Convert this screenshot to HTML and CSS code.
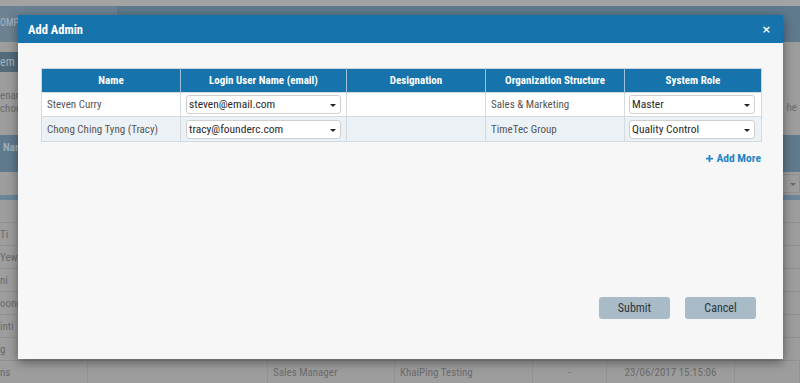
FILE: index.html
```html
<!DOCTYPE html>
<html lang="en">
  <head>
    <meta charset="UTF-8" />
    <title>Add Admin</title>
    <meta name="viewport" content="width=device-width, initial-scale=1.0" />
    <link rel="stylesheet" href="styles.css">
  </head>
  <body>
    <div class="page">
      <!-- page behind the dialog -->
      <div class="topbar"></div>
      <div class="appbar">
        <div class="brand">OMP</div>
      </div>
      <div class="section">
        <span class="section-title">em</span>
      </div>
      <div class="intro">
        <p class="intro-left">enan<br />choo</p>
        <p class="intro-right">he</p>
      </div>
      <div class="list-head">
        <span>Nar</span>
      </div>
      <div class="filter">
        <span class="filter-select"><span class="caret"></span></span>
      </div>
      <div class="list-line"></div>
      <div class="list">
        <div class="list-row"><span></span></div>
        <div class="list-row"><span>Ti</span></div>
        <div class="list-row"><span>Yew</span></div>
        <div class="list-row"><span>ni</span></div>
        <div class="list-row"><span>oong</span></div>
        <div class="list-row"><span>inti</span></div>
        <div class="list-row"><span>g</span></div>
        <div class="list-row last">
          <span>ns</span>
          <span></span>
          <span>Sales Manager</span>
          <span>KhaiPing Testing</span>
          <span class="center">-</span>
          <span class="center">23/06/2017 15:15:06</span>
          <span></span>
        </div>
      </div>

      <!-- dialog -->
      <div class="modal">
        <div class="modal-head">
          <h2 class="modal-title">Add Admin</h2>
          <button class="close">&times;</button>
        </div>
        <div class="modal-body">
          <table class="admins">
            <colgroup>
              <col style="width: 139px" />
              <col style="width: 166px" />
              <col style="width: 139px" />
              <col style="width: 139px" />
              <col style="width: 137px" />
            </colgroup>
            <thead>
              <tr>
                <th>Name</th>
                <th>Login User Name (email)</th>
                <th>Designation</th>
                <th>Organization Structure</th>
                <th>System Role</th>
              </tr>
            </thead>
            <tbody>
              <tr>
                <td>Steven Curry</td>
                <td class="pick">
                  <div class="select">steven@email.com<span class="caret"></span></div>
                </td>
                <td></td>
                <td>Sales &amp; Marketing</td>
                <td class="pick role">
                  <div class="select">Master<span class="caret"></span></div>
                </td>
              </tr>
              <tr>
                <td>Chong Ching Tyng (Tracy)</td>
                <td class="pick">
                  <div class="select">tracy@founderc.com<span class="caret"></span></div>
                </td>
                <td></td>
                <td>TimeTec Group</td>
                <td class="pick role">
                  <div class="select">Quality Control<span class="caret"></span></div>
                </td>
              </tr>
            </tbody>
          </table>

          <a href="#" class="add-more">
            <svg width="7" height="7" viewBox="0 0 8 8">
              <path d="M3 0h2v3h3v2H5v3H3V5H0V3h3z" fill="currentColor" />
            </svg>
            Add More
          </a>

          <div class="actions">
            <button class="btn">Submit</button>
            <button class="btn">Cancel</button>
          </div>
        </div>
      </div>
    </div>
  </body>
</html>
```

FILE: styles.css
```css
body {
  margin: 0;
  font-family: "Roboto Condensed", "Open Sans", sans-serif;
}
.page {
  position: relative;
  height: 383px;
  overflow: hidden;
  background: #9d9d9d;
  color: #6b6b6b;
  font-size: 11px;
}

/* background page (dimmed) */
.topbar {
  height: 6px;
  background: #a3a3a3;
}
.appbar {
  height: 36px;
  background: #5f7a8d;
  display: flex;
}
.appbar .brand {
  width: 117px;
  background: #6c8292;
  color: #a9b6bf;
  font-size: 10px;
  padding-top: 11px;
  box-sizing: border-box;
}
.section {
  height: 20px;
  margin-top: 10px;
  display: flex;
}
.section-title {
  width: 40px;
  background: #536b7b;
  color: #a7b3bb;
  font-size: 12px;
  line-height: 20px;
}
.intro {
  height: 63px;
  display: flex;
  justify-content: space-between;
}
.intro p {
  margin: 0;
  font-size: 11px;
  line-height: 13px;
}
.intro-left {
  padding-top: 17px;
}
.intro-right {
  padding-top: 29px;
  padding-right: 3px;
}
.list-head {
  height: 37px;
  background: #5f7a8c;
  color: #9fafba;
  font-size: 11px;
  font-weight: bold;
  line-height: 26px;
  padding-left: 3px;
}
.filter {
  height: 23px;
  display: flex;
  justify-content: flex-end;
  align-items: center;
}
.filter-select {
  position: relative;
  width: 60px;
  height: 17px;
  border: 1px solid #8f8f8f;
  border-radius: 2px;
}
.filter-select .caret {
  right: 3px;
  border-top-color: #6a6a6a;
}
.list-line {
  height: 5px;
  background: #6b8699;
}
.list-row {
  height: 22px;
  border-bottom: 1px solid #919191;
  display: grid;
  grid-template-columns: 88px 180px 127px 138px 74px 128px 1fr;
  align-items: center;
  font-size: 11px;
}
.list-row.last {
  border-bottom: none;
  padding-top: 1px;
}
.list-row.last span {
  border-right: 1px solid #929292;
  height: 22px;
  line-height: 22px;
  padding-left: 5px;
}
.list-row.last span:first-child {
  padding-left: 0;
}
.list-row .center {
  text-align: center;
  padding-left: 0 !important;
}

/* dialog */
.modal {
  position: absolute;
  left: 18px;
  top: 15px;
  width: 765px;
  height: 344px;
  background: #f7f7f7;
  box-shadow: 0 3px 10px rgba(0, 0, 0, 0.45);
  display: flex;
  flex-direction: column;
}
.modal-head {
  height: 28px;
  background: #1673ab;
  display: flex;
  align-items: center;
  justify-content: space-between;
  padding: 0 12px 0 10px;
}
.modal-title {
  margin: 0;
  color: white;
  font-size: 12.5px;
  font-weight: bold;
}
.close {
  background: none;
  border: none;
  padding: 0;
  color: white;
  font-family: "DejaVu Sans", sans-serif;
  font-size: 11px;
  font-weight: bold;
  line-height: 1;
}
.modal-body {
  flex: 1;
  display: flex;
  flex-direction: column;
  padding: 25px 22px 40px 23px;
}
.admins {
  width: 720px;
  border-collapse: collapse;
  table-layout: fixed;
  border: 1px solid #cdd6dc;
}
.admins th {
  height: 23px;
  padding: 0;
  background: #1673ab;
  color: white;
  font-size: 11px;
  font-weight: bold;
  border-left: 1px solid #9ec0d8;
}
.admins th:first-child {
  border-left: none;
}
.admins td {
  height: 23px;
  padding: 0 5px;
  border: 1px solid #d3dbe1;
  background: white;
  color: #555;
  font-size: 11px;
}
.admins tbody tr:nth-child(2) td {
  background: #ebf1f5;
  height: 24px;
}
.admins td.pick {
  padding: 0 5px;
}
.admins td.role {
  padding: 0 6px 0 4px;
}
.select {
  position: relative;
  height: 17px;
  line-height: 17px;
  padding-left: 2px;
  background: white;
  border: 1px solid #cfcfcf;
  border-radius: 3px;
  color: #2a2a2a;
  font-size: 11.5px;
}
.caret {
  position: absolute;
  right: 4px;
  top: 8px;
  width: 0;
  height: 0;
  border-left: 3px solid transparent;
  border-right: 3px solid transparent;
  border-top: 3px solid #222;
}
.add-more {
  align-self: flex-end;
  margin-top: 9px;
  display: flex;
  align-items: center;
  gap: 3px;
  color: #1f86c7;
  font-size: 11.5px;
  font-weight: bold;
  text-decoration: none;
}
.actions {
  margin-top: auto;
  display: flex;
  justify-content: flex-end;
  gap: 15px;
  padding-right: 5px;
}
.btn {
  width: 71px;
  height: 22px;
  border: none;
  border-radius: 3px;
  background: #a8bbc6;
  color: #2c3640;
  font-family: inherit;
  font-size: 12px;
}
```
